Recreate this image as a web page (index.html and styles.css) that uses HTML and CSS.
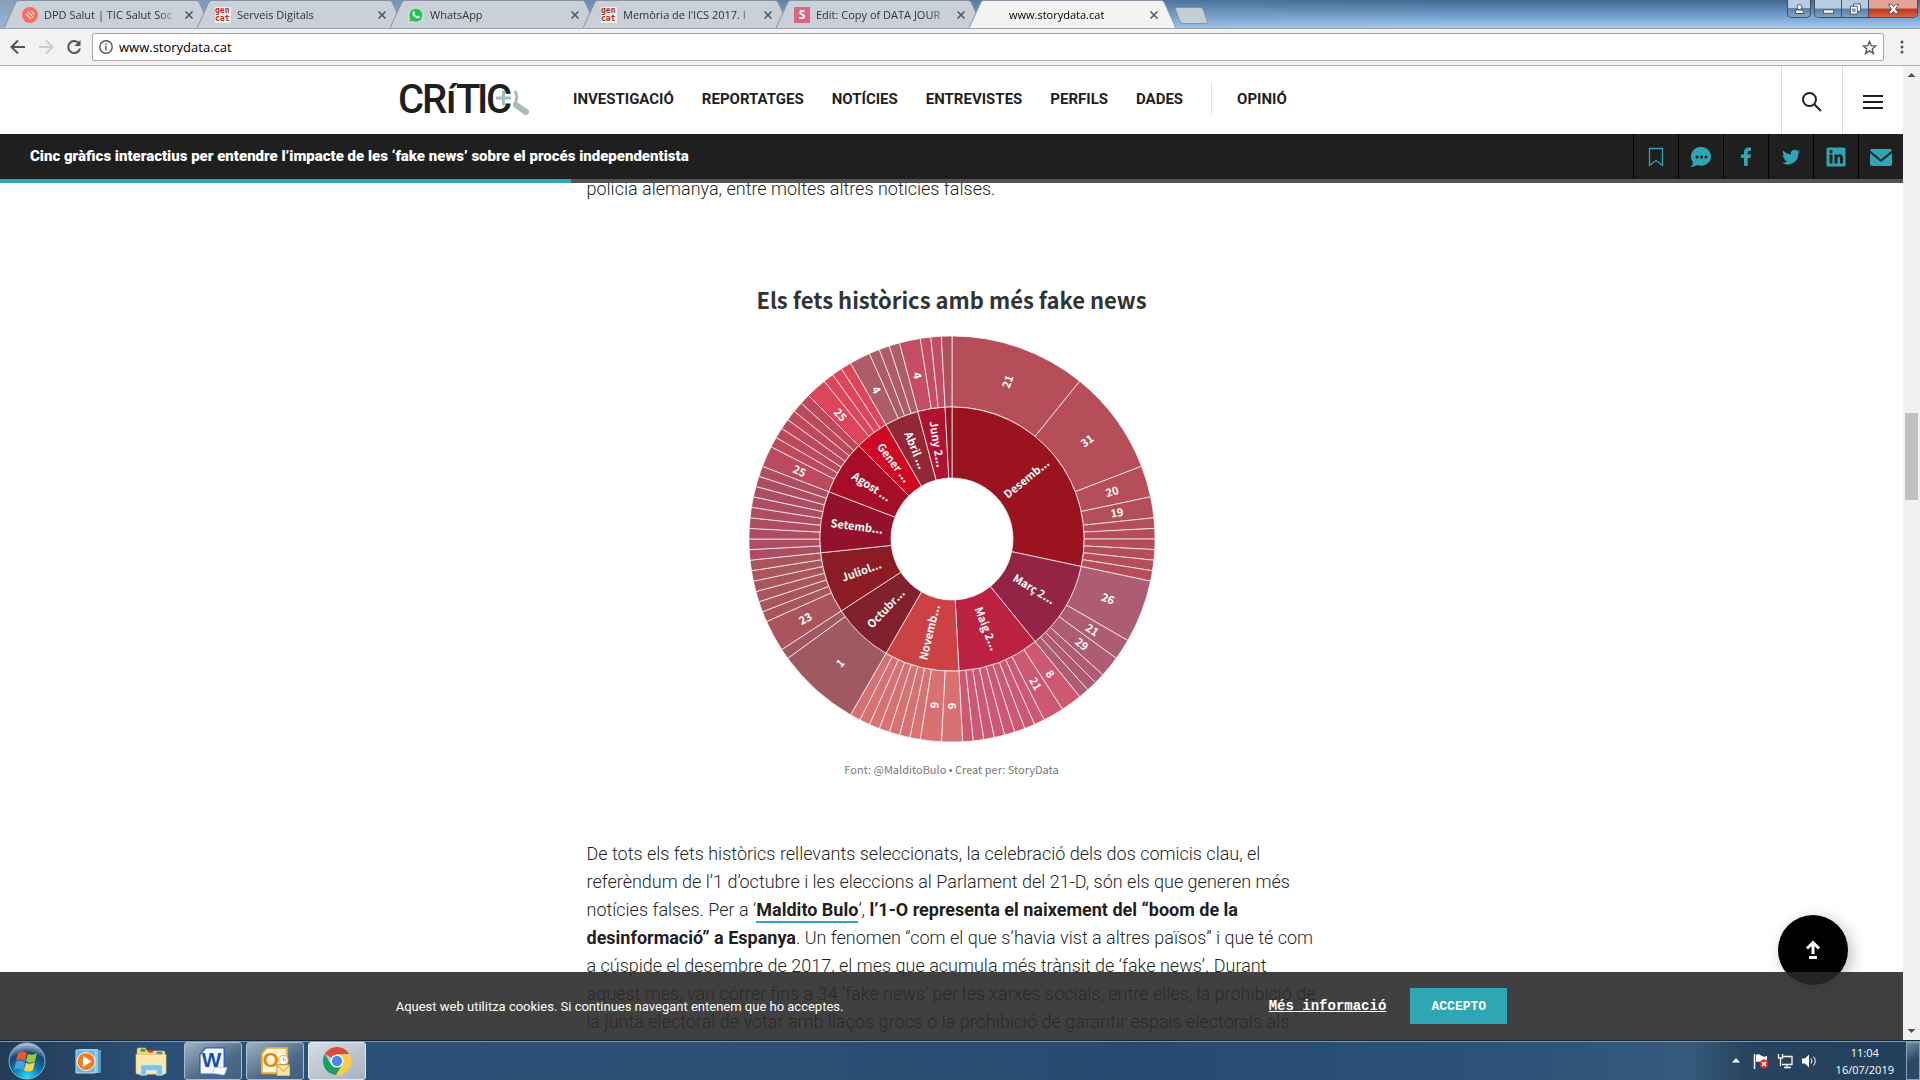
FILE: index.html
```html
<!DOCTYPE html>
<html lang="ca">
<head>
    <meta charset="UTF-8">
    <meta name="viewport" content="width=device-width, initial-scale=1.0">
    <title>www.storydata.cat</title>
    <link rel="stylesheet" href="styles.css">
</head>
<body>
<div class="tab-strip">
    <div class="tab">
        <svg class="tab-shape" viewBox="0 0 207 28" preserveAspectRatio="none"><path d="M0 28 L12 2 Q13 .5 15 .5 H192 Q194 .5 195 2 L207 28"/></svg>
        <svg class="favicon" viewBox="0 0 16 16"><circle cx="8" cy="8" r="8" fill="#fb6a63"/><path d="M4 7l5 5M5.500 4.500l6 6M8.500 3.500l4 4" stroke="#ffd9d5" stroke-width="1.300"/></svg>
        <span class="tab-title">DPD Salut | TIC Salut Soc</span>
        <button class="tab-close" aria-label="Tanca"><svg viewBox="0 0 8 8"><path d="M.5.5l7 7M7.500.5l-7 7"/></svg></button>
    </div>
    <div class="tab">
        <svg class="tab-shape" viewBox="0 0 207 28" preserveAspectRatio="none"><path d="M0 28 L12 2 Q13 .5 15 .5 H192 Q194 .5 195 2 L207 28"/></svg>
        <span class="favicon gencat"><b>gen</b><b>cat</b></span>
        <span class="tab-title">Serveis Digitals</span>
        <button class="tab-close" aria-label="Tanca"><svg viewBox="0 0 8 8"><path d="M.5.5l7 7M7.500.5l-7 7"/></svg></button>
    </div>
    <div class="tab">
        <svg class="tab-shape" viewBox="0 0 207 28" preserveAspectRatio="none"><path d="M0 28 L12 2 Q13 .5 15 .5 H192 Q194 .5 195 2 L207 28"/></svg>
        <svg class="favicon" viewBox="0 0 16 16"><path d="M.5 15.500l1.200-4A7 7 0 1 1 4.600 14.400z" fill="#25c150" stroke="#eafaf0" stroke-width=".8"/><path d="M5.300 4.500c.6-.6 1-.4 1.300.4.300.8.3 1-.3 1.600.6 1.300 1.600 2.200 3 2.800.6-.7.900-.9 1.400-.6 1.100.5 1.400.7 1.100 1.300-.5 1.300-2 1.600-3.300 1.100C6 10.200 4.800 8.500 4.500 6.800c-.1-.9.200-1.700.8-2.300z" fill="#fff"/></svg>
        <span class="tab-title">WhatsApp</span>
        <button class="tab-close" aria-label="Tanca"><svg viewBox="0 0 8 8"><path d="M.5.5l7 7M7.500.5l-7 7"/></svg></button>
    </div>
    <div class="tab">
        <svg class="tab-shape" viewBox="0 0 207 28" preserveAspectRatio="none"><path d="M0 28 L12 2 Q13 .5 15 .5 H192 Q194 .5 195 2 L207 28"/></svg>
        <span class="favicon gencat"><b>gen</b><b>cat</b></span>
        <span class="tab-title">Memòria de l'ICS 2017. I</span>
        <button class="tab-close" aria-label="Tanca"><svg viewBox="0 0 8 8"><path d="M.5.5l7 7M7.500.5l-7 7"/></svg></button>
    </div>
    <div class="tab">
        <svg class="tab-shape" viewBox="0 0 207 28" preserveAspectRatio="none"><path d="M0 28 L12 2 Q13 .5 15 .5 H192 Q194 .5 195 2 L207 28"/></svg>
        <span class="favicon story">S</span>
        <span class="tab-title">Edit: Copy of DATA JOUR</span>
        <button class="tab-close" aria-label="Tanca"><svg viewBox="0 0 8 8"><path d="M.5.5l7 7M7.500.5l-7 7"/></svg></button>
    </div>
    <div class="tab current">
        <svg class="tab-shape" viewBox="0 0 207 28" preserveAspectRatio="none"><path d="M0 28 L12 2 Q13 .5 15 .5 H192 Q194 .5 195 2 L207 28"/></svg>
        <span class="favicon"></span>
        <span class="tab-title">www.storydata.cat</span>
        <button class="tab-close" aria-label="Tanca"><svg viewBox="0 0 8 8"><path d="M.5.5l7 7M7.500.5l-7 7"/></svg></button>
    </div>
    <button class="new-tab" aria-label="Pestanya nova"><svg viewBox="0 0 34 17"><path d="M3 .5h23q2 0 3 2l4.500 12q.5 2-1.500 2H9q-2 0-3-2L1.500 2.500q-.5-2 1.500-2z"/></svg></button>
    <div class="window-buttons">
        <button class="win-user" aria-label="Usuari"><svg viewBox="0 0 12 12"><circle cx="6" cy="4" r="2.500"/><path d="M2 10.500V9q0-2 2-2h4q2 0 2 2v1.500z"/></svg></button>
        <div class="win-group">
            <button class="win-min" aria-label="Minimitza"><svg viewBox="0 0 14 12"><rect x="1.500" y="7" width="11" height="3.500"/></svg></button>
            <button class="win-max" aria-label="Restaura"><svg viewBox="0 0 14 12"><path d="M5 .5h7.500v8H5z"/><path d="M1.500 3h7.500v8.500H1.500z"/><path d="M4 6h2.500v2.500H4z"/></svg></button>
            <button class="win-close" aria-label="Tanca"><svg viewBox="0 0 14 12"><path d="M1.500 1h3.500L7 3.500 9 1h3.500L9.200 6l3.300 5H9L7 8.500 5 11H1.500l3.300-5z"/></svg></button>
        </div>
    </div>
</div>

<div class="toolbar">
    <button class="tool" aria-label="Enrere"><svg viewBox="0 0 16 16"><path d="M15 8H2M8 1.500L1.500 8 8 14.500"/></svg></button>
    <button class="tool disabled" aria-label="Endavant"><svg viewBox="0 0 16 16"><path d="M1 8h13M8 1.500L14.500 8 8 14.500"/></svg></button>
    <button class="tool" aria-label="Recarrega"><svg viewBox="0 0 16 16"><path d="M13 4.500A6 6 0 1 0 14 9.500"/><path d="M14.500 1v6h-6z" class="solid"/></svg></button>
    <div class="address">
        <svg class="info" viewBox="0 0 14 14"><circle cx="7" cy="7" r="6.200"/><path d="M7 6v4.500M7 3.300v1.600"/></svg>
        <input type="text" value="www.storydata.cat" aria-label="Adreça">
        <svg class="star" viewBox="0 0 16 16"><path d="M8 1.500l1.800 4.600 4.900.3-3.800 3.100 1.300 4.800L8 11.600l-4.200 2.700 1.300-4.800L1.300 6.400l4.900-.3z"/></svg>
    </div>
    <button class="tool dots" aria-label="Menú"><svg viewBox="0 0 4 14"><circle cx="2" cy="2" r="1.500"/><circle cx="2" cy="7" r="1.500"/><circle cx="2" cy="12" r="1.500"/></svg></button>
</div>

<div class="viewport">
    <div class="page">
        <header class="site-header">
            <a href="#" class="logo" aria-label="Crític">
                <svg viewBox="0 0 132 36" width="132" height="36">
                    <text x="-1 23 47 57 78 87" y="33">CRíTIC</text>
                    <path d="M97 18h15M104.500 10.500v15" class="glass"/>
                    <path d="M116 11q4 7-1 14" class="glass"/>
                    <path d="M117 25l10 7" class="handle"/>
                </svg>
            </a>
            <nav>
                <a href="#">INVESTIGACIÓ</a>
                <a href="#">REPORTATGES</a>
                <a href="#">NOTÍCIES</a>
                <a href="#">ENTREVISTES</a>
                <a href="#">PERFILS</a>
                <a href="#">DADES</a>
                <a href="#" class="opinion">OPINIÓ</a>
            </nav>
            <div class="header-tools">
                <button aria-label="Cerca"><svg viewBox="0 0 20 20"><circle cx="7.500" cy="7.500" r="6.500"/><path d="M12 12l7 7"/></svg></button>
                <button aria-label="Menú"><svg viewBox="0 0 20 20"><path d="M0 4h20M0 10h20M0 16h20"/></svg></button>
            </div>
        </header>
        <div class="article-bar">
            <h1>Cinc gràfics interactius per entendre l’impacte de les ‘fake news’ sobre el procés independentista</h1>
            <div class="share">
                <a href="#" aria-label="Desa"><svg viewBox="0 0 24 24"><path d="M5.500 3.500h13v17L12 15.500l-6.500 5z" fill="none" stroke="#2ea6b4" stroke-width="1.300"/></svg></a>
                <a href="#" aria-label="Comenta"><svg viewBox="0 0 24 24"><path d="M12.500 2a10 9.300 0 1 1-4 18Q5 22 1.500 22q2.500-2 2.300-5A9.500 9.500 0 0 1 12.500 2z"/><g fill="#1f1f1f"><circle cx="8" cy="12" r="1.500"/><circle cx="12.500" cy="12" r="1.500"/><circle cx="17" cy="12" r="1.500"/></g></svg></a>
                <a href="#" aria-label="Facebook"><svg viewBox="0 0 24 24"><path d="M10 21v-8H7V9.500h3V7c0-3 2-4.500 4.500-4.500H17V6h-1.800c-1.200 0-1.500.6-1.500 1.500v2H17l-.5 3.500h-2.800v8z"/></svg></a>
                <a href="#" aria-label="Twitter"><svg viewBox="0 0 24 24"><path d="M21 6.500c-.7.300-1.400.5-2.100.6.800-.5 1.300-1.200 1.600-2-.7.400-1.500.7-2.300.9a3.700 3.700 0 0 0-6.300 3.400C8.800 9.200 6.100 7.800 4.300 5.500c-1 1.700-.5 3.800 1.100 4.900-.6 0-1.200-.2-1.700-.5 0 1.800 1.200 3.300 3 3.700-.5.100-1.100.2-1.700.1.500 1.400 1.800 2.500 3.500 2.500A7.500 7.500 0 0 1 3 17.800 10.500 10.500 0 0 0 19.200 8.400c.7-.5 1.300-1.200 1.800-1.900z"/></svg></a>
                <a href="#" aria-label="LinkedIn"><svg viewBox="0 0 24 24"><path fill-rule="evenodd" d="M4 2.500h16q1.500 0 1.500 1.500v16q0 1.500-1.500 1.500H4q-1.500 0-1.500-1.500V4Q2.500 2.500 4 2.500zM5.500 9.500v9h3v-9zM7 5a1.700 1.700 0 1 0 .01 0zM10.500 9.500v9h3v-5c0-2.500 2.500-2.300 2.500 0v5h3v-5.600c0-4-4-4.400-5.500-2.200V9.500z"/></svg></a>
                <a href="#" aria-label="Correu"><svg viewBox="0 0 24 24"><path d="M3 4h18q2 0 2 1.500L12 14.500 1 5.500Q1 4 3 4z"/><path d="M1 8l11 9 11-9v11q0 2-2 2H3q-2 0-2-2z"/></svg></a>
            </div>
        </div>
        <div class="progress"><div class="progress-done"></div></div>

        <main>
            <article>
                <p class="scrolled">policia alemanya, entre moltes altres notícies falses.</p>
                <figure>
                    <h2>Els fets històrics amb més fake news</h2>
                    <svg id="sunburst" viewBox="-210 -210 420 420" width="420" height="420"></svg>
                    <figcaption>Font: @MalditoBulo • Creat per: StoryData</figcaption>
                </figure>
                <p>De tots els fets històrics rellevants seleccionats, la celebració dels dos comicis clau, el referèndum de l’1 d’octubre i les eleccions al Parlament del 21-D, són els que generen més notícies falses. Per a ‘<a href="#">Maldito Bulo</a>’, <strong>l’1-O representa el naixement del “boom de la desinformació” a Espanya</strong>. Un fenomen “com el que s’havia vist a altres països” i que té com a cúspide el desembre de 2017, el mes que acumula més trànsit de ‘fake news’. Durant aquest mes, van córrer fins a 34 ‘fake news’ per les xarxes socials, entre elles, la prohibició de la junta electoral de votar amb llaços grocs o la prohibició de garantir espais electorals als</p>
            </article>
        </main>

        <button class="to-top" aria-label="Torna a dalt"><svg viewBox="0 0 16 20"><path d="M8 14V3M2 8.500L8 2.500l6 6M4 17.500h8"/></svg></button>
        <div class="cookies">
            <p>Aquest web utilitza cookies. Si continues navegant entenem que ho acceptes.</p>
            <a href="#">Més informació</a>
            <button>ACCEPTO</button>
        </div>
    </div>
    <div class="scrollbar">
        <svg viewBox="0 0 17 17"><path d="M4.500 11L8.500 7l4 4z"/></svg>
        <div class="thumb"></div>
        <svg class="down" viewBox="0 0 17 17"><path d="M4.500 6l4 4 4-4z"/></svg>
    </div>
</div>

<div class="taskbar">
    <button class="start" aria-label="Inicia"><svg viewBox="0 0 38 38">
        <defs><radialGradient id="orb" cx=".5" cy=".95" r=".95"><stop offset="0" stop-color="#22e0ff"/><stop offset=".4" stop-color="#0a78b4"/><stop offset=".7" stop-color="#154673"/><stop offset="1" stop-color="#b9cfdf"/></radialGradient></defs>
        <circle cx="19" cy="19" r="18" fill="url(#orb)" stroke="#8fb3cd"/>
        <path d="M10 11q4-3 9 0l-2 8q-4-3-9 0z" fill="#e8562a"/><path d="M20 12q5 2 9-1l-2 8q-4 3-9 0z" fill="#9bcb3c"/><path d="M8 20q4-3 9 0l-2 8q-4-3-9 0z" fill="#4d9fe0"/><path d="M18 21q5 2 9-1l-2 8q-4 3-9 0z" fill="#fcd13a"/>
    </svg></button>
    <button class="task" aria-label="Reproductor"><svg viewBox="0 0 32 32"><path d="M9 5h19v23H9z" fill="#4d9fce"/><path d="M6 4h19v24H6z" fill="#8cc6e6"/><path d="M3 5h19v23H3z" fill="#6fb2dc" stroke="#b8def2"/><circle cx="13" cy="16.500" r="9" fill="#f47b20" stroke="#fff"/><path d="M10 11l8.500 5.500L10 22z" fill="#fff"/></svg></button>
    <button class="task" aria-label="Explorador"><svg viewBox="0 0 34 32"><path d="M2 4q0-2 2-2h7l2 3h17q2 0 2 2v22H2z" fill="#f0d684"/><path d="M6 3h5v3H6z" fill="#2fa24a"/><path d="M14 4h5v3h-5z" fill="#cf3c30"/><path d="M23 6h6v3h-6z" fill="#3e8fd4"/><path d="M1 9h32v19q0 2-2 2H3q-2 0-2-2z" fill="#fbe9a5" stroke="#d9b95e" stroke-width=".6"/><path d="M6 31V22q0-2 2-2h19q2 0 2 2v9h-6v-5H12v5z" fill="#7cc1e8" stroke="#d3eefa"/></svg></button>
    <button class="task open" aria-label="Word"><svg viewBox="0 0 32 32"><path d="M8 2h20v28H2V9z" fill="#f4f8fd" stroke="#2c5fb5" stroke-width="1.500"/><path d="M17 23l14 0-3 8-12-2z" fill="#fff" stroke="#a8bbd8" stroke-width=".8"/><text x="4" y="22" class="app-letter word-letter">W</text></svg></button>
    <button class="task open" aria-label="Outlook"><svg viewBox="0 0 32 32"><path d="M7 2h22v27H2V8z" fill="#fff5d6" stroke="#eda91c" stroke-width="2"/><text x="3" y="22" class="app-letter outlook-letter">O</text><circle cx="25" cy="15" r="5" fill="#fff" stroke="#e8a13a"/><path d="M25 12v3h3" stroke="#e07b20" fill="none"/><path d="M18 20h14v12H18z" fill="#fae6a4" stroke="#b98f35"/><path d="M18 20l7 7 7-7" fill="none" stroke="#b98f35"/></svg></button>
    <button class="task open current" aria-label="Chrome"><svg viewBox="0 0 32 32"><path d="M16 16L3 8.500A15 15 0 0 1 29 8.500L16 9z" fill="#dd4b3e"/><path d="M3 8.500A15 15 0 0 0 15 31l7-11.500L9.500 19.500z" fill="#1aa15f"/><path d="M29 8.500A15 15 0 0 1 15 31l7-11.500L16 9h13.500z" fill="#fecd41"/><circle cx="16" cy="16" r="7" fill="#fff"/><circle cx="16" cy="16" r="5.500" fill="#4688f1"/></svg></button>
    <div class="tray">
        <svg class="tray-arrow" viewBox="0 0 8 5"><path d="M0 4.500L4 0l4 4.500z" fill="#fff"/></svg>
        <svg viewBox="0 0 16 16"><path d="M1.500 1v15" stroke="#fff" stroke-width="1.500"/><path d="M3 2q3-1.500 5 .5t6 .5v7q-4 1-6-.5T3 9z" fill="#fff"/><circle cx="11" cy="11" r="4.500" fill="#e02a1f"/><path d="M9 9l4 4M13 9l-4 4" stroke="#fff" stroke-width="1.500"/></svg>
        <svg viewBox="0 0 16 16" fill="none" stroke="#fff" stroke-width="1.300"><path d="M6 3.500h9v8H5M10 11.500V14M7 14.500h7M1.500 1v4h4V1M3.500 5v8"/></svg>
        <svg viewBox="0 0 16 16"><path d="M1 5.500h3L8 1.500v13l-4-4H1z" fill="#fff"/><path d="M10 5.500q2 2.500 0 5M12.500 3.500q3.500 4.500 0 9" fill="none" stroke="#fff"/></svg>
        <div class="clock"><span>11:04</span><span>16/07/2019</span></div>
    </div>
    <button class="show-desktop" aria-label="Mostra l'escriptori"></button>
</div>

<script>
    // fake news per month; each item is [label, number of news]
    const months = [
        { name: 'Desemb', color: '#9c1320', items: [['21', 13], ['31', 10], ['20', 3], ['19', 2], 1, 1, 1, 1, 1, 1] },
        { name: 'Març 2', color: '#932445', items: [['26', 6], ['21', 2], ['29', 2], 1, 1, 1] },
        { name: 'Maig 2', color: '#bb2241', items: [['8', 2], ['21', 2], 1, 1, 1, 1, 1, 1, 1, 1] },
        { name: 'Novemb', color: '#cb4144', items: [['9', 2], ['9', 2], 1, 1, 1, 1, 1, 1, 1] },
        { name: 'Octubr', color: '#80212d', items: [['1', 8], 1] },
        { name: 'Juliol', color: '#8c1c24', items: [['23', 3], 1, 1, 1, 1, 1, 1] },
        { name: 'Setemb', color: '#94112b', items: [1, 1, 1, 1, 1, 1, 1, 1, 1] },
        { name: 'Agost ', color: '#a50e26', items: [['25', 2], 1, 1, 1, 1, 1, 1] },
        { name: 'Gener ', color: '#d00824', items: [['25', 2], 1, 1, 1] },
        { name: 'Abril ', color: '#932733', items: [['4', 2], 1, 1, 1] },
        { name: 'Juny 2', color: '#b01230', items: [['4', 2], 1, 1] },
        { name: '', color: '#8f1626', items: [1] }
    ];
    const radius = [61, 132, 203];
    const svg = document.getElementById('sunburst');
    const total = 120;

    function point(deg, r) {
        const a = (deg - 90) * Math.PI / 180;
        return (r * Math.cos(a)).toFixed(2) + ' ' + (r * Math.sin(a)).toFixed(2);
    }

    function add(tag, attrs, parent) {
        const el = document.createElementNS('http://www.w3.org/2000/svg', tag);
        for (const key in attrs) el.setAttribute(key, attrs[key]);
        (parent || svg).appendChild(el);
        return el;
    }

    function slice(from, to, inner, outer, color, cls) {
        const large = to - from > 180 ? 1 : 0;
        add('path', {
            d: `M${point(from, inner)} L${point(from, outer)} A${outer} ${outer} 0 ${large} 1 ${point(to, outer)} ` +
               `L${point(to, inner)} A${inner} ${inner} 0 ${large} 0 ${point(from, inner)}Z`,
            fill: color,
            class: cls
        });
    }

    function label(text, deg, r, dots) {
        // labels on the left half are turned round to stay readable
        const turn = deg < 180 ? deg - 90 : deg - 270;
        const el = add('text', { transform: `translate(${point(deg, r).replace(' ', ',')}) rotate(${turn})`, dy: 4 });
        el.textContent = text;
        if (dots) add('tspan', { class: 'dots-end' }, el).textContent = '…';
    }

    let angle = 0;
    const labels = [];
    months.forEach(function(month) {
        const start = angle;
        month.items.forEach(function(item) {
            const count = item[1] || item;
            const end = angle + count * 360 / total;
            slice(angle, end, radius[1], radius[2], month.color, 'outer');
            if (item[0]) labels.push([item[0], (angle + end) / 2, 167, false]);
            angle = end;
        });
        slice(start, angle, radius[0], radius[1], month.color, 'inner');
        if (month.name) labels.push([month.name, (start + angle) / 2, 96, true]);
    });
    labels.forEach(function(l) { label(l[0], l[1], l[2], l[3]); });
</script>
</body>
</html>
```
FILE: styles.css
```css
* {
    margin: 0;
    padding: 0;
    box-sizing: border-box;
}
body {
    height: 100vh;
    display: flex;
    flex-direction: column;
    overflow: hidden;
    font-family: Roboto, sans-serif;
    color: #1f1f1f;
    background-color: #fff;
}
button {
    border: none;
    background: none;
    cursor: pointer;
}
svg {
    display: block;
}

/* browser tabs */
.tab-strip {
    height: 28px;
    padding-left: 4px;
    display: flex;
    flex: none;
    background: linear-gradient(90deg, rgba(150, 175, 200, 0.8), rgba(120, 155, 190, 0.4) 50%, transparent 75%), linear-gradient(#44698f, #6d98c5 50%, #a3cbf3);
    font-family: "Open Sans", sans-serif;
    font-size: 11px;
}
.tab {
    position: relative;
    width: 207px;
    height: 28px;
    margin-right: -14px;
    padding: 1px 18px 0 18px;
    display: flex;
    align-items: center;
    color: #333;
}
.tab-shape {
    position: absolute;
    left: 0;
    top: 0;
    width: 100%;
    height: 28px;
}
.tab-shape path {
    fill: #c9d0d8;
    stroke: #8793a0;
}
.tab.current {
    z-index: 2;
    color: #000;
}
.tab.current .tab-shape path {
    fill: #f2f2f2;
}
.favicon {
    position: relative;
    flex: none;
    width: 16px;
    height: 16px;
    margin-right: 6px;
}
.gencat {
    background-color: #eee;
    color: #a8322a;
    font-family: "DejaVu Sans Mono", monospace;
    font-size: 8px;
    line-height: 8px;
}
.gencat b {
    display: block;
}
.story {
    background-color: #dd6584;
    color: #fff;
    font-size: 12px;
    font-weight: bold;
    line-height: 16px;
    text-align: center;
}
.tab-title {
    position: relative;
    flex: 1;
    overflow: hidden;
    white-space: nowrap;
    -webkit-mask-image: linear-gradient(90deg, #000 85%, transparent);
    mask-image: linear-gradient(90deg, #000 85%, transparent);
}
.tab-close {
    position: relative;
    width: 8px;
    height: 8px;
    margin-left: 6px;
}
.tab-close path {
    stroke: #555;
    stroke-width: 1.5;
}
.new-tab {
    width: 34px;
    height: 17px;
    margin: 7px 0 0 12px;
}
.new-tab path {
    fill: #c3ced9;
    stroke: #8795a3;
}
.window-buttons {
    margin-left: auto;
    padding-right: 2px;
    display: flex;
    gap: 3px;
}
.window-buttons button {
    height: 18px;
    display: flex;
    justify-content: center;
    align-items: center;
    background: linear-gradient(#b9cbe0 45%, #5d7f9f 50%, #86a6c4);
}
.window-buttons svg {
    width: 13px;
    height: 12px;
    fill: #fff;
    stroke: #44546a;
}
.window-buttons .win-user {
    width: 24px;
    border: 1px solid #39506b;
    border-top: none;
    border-radius: 0 0 5px 5px;
}
.win-group {
    height: 18px;
    display: flex;
    border: 1px solid #39506b;
    border-top: none;
    border-radius: 0 0 5px 5px;
    overflow: hidden;
}
.win-min, .win-max {
    width: 27px;
    border-right: 1px solid #39506b;
}
.win-group .win-close {
    width: 48px;
    background: linear-gradient(#e2a595 45%, #c2331c 50%, #d9694c);
}

/* address bar */
.toolbar {
    height: 38px;
    flex: none;
    padding: 0 16px 0 10px;
    display: flex;
    align-items: center;
    background-color: #f2f2f2;
    border-top: 1px solid #9aa3ad;
    border-bottom: 1px solid #b0b0b0;
}
.tool {
    width: 16px;
    height: 16px;
    margin-right: 12px;
}
.tool path {
    fill: none;
    stroke: #555;
    stroke-width: 2;
}
.tool .solid {
    fill: #555;
    stroke: none;
}
.tool.disabled path {
    stroke: #ccc;
}
.tool.dots {
    width: 4px;
    height: 14px;
    margin: 0 0 0 16px;
}
.dots circle {
    fill: #555;
}
.address {
    flex: 1;
    height: 28px;
    margin-left: -2px;
    padding: 0 6px;
    display: flex;
    align-items: center;
    background-color: #fff;
    border: 1px solid #a8a8a8;
    border-radius: 2px;
}
.address svg {
    fill: none;
    stroke: #555;
    stroke-width: 1.4;
}
.info {
    width: 14px;
    height: 14px;
}
.star {
    width: 15px;
    height: 15px;
}
.address input {
    flex: 1;
    margin-left: 6px;
    border: none;
    outline: none;
    background: none;
    font-family: "Open Sans", sans-serif;
    font-size: 13px;
    color: #000;
}

.viewport {
    flex: 1;
    min-height: 0;
    display: flex;
}
.page {
    position: relative;
    flex: 1;
    min-width: 0;
    display: flex;
    flex-direction: column;
    overflow: hidden;
}
.scrollbar {
    width: 17px;
    display: flex;
    flex-direction: column;
    align-items: center;
    background-color: #f1f1f1;
}
.scrollbar svg {
    width: 17px;
    height: 17px;
    fill: #505050;
}
.thumb {
    width: 13px;
    height: 87px;
    margin-top: 330px;
    background-color: #c1c1c1;
}
.down {
    margin-top: auto;
}

/* site header */
.site-header {
    height: 68px;
    flex: none;
    padding-left: 399px;
    display: flex;
}
.logo {
    width: 132px;
    margin: 14px 42px 0 0;
}
.logo text {
    font-family: Roboto, sans-serif;
    font-size: 40px;
    font-weight: 500;
    fill: #1f1f1f;
}
.glass, .handle {
    fill: none;
    stroke: #a7bcb9;
    stroke-width: 3;
}
.handle {
    stroke-width: 6;
    stroke-linecap: round;
}
nav {
    flex: 1;
    display: flex;
    align-items: center;
    gap: 28px;
    padding-bottom: 2px;
}
nav a {
    color: #1f1f1f;
    font-size: 15px;
    font-weight: 700;
    text-decoration: none;
}
nav .opinion {
    padding-left: 25px;
    border-left: 1px solid #ddd;
    line-height: 32px;
}
.header-tools {
    display: flex;
}
.header-tools button {
    width: 61px;
    padding-top: 4px;
    display: flex;
    justify-content: center;
    align-items: center;
    border-left: 1px solid #ddd;
}
.header-tools svg {
    width: 20px;
    height: 20px;
    fill: none;
    stroke: #1f1f1f;
    stroke-width: 2;
}
.article-bar {
    height: 45px;
    flex: none;
    padding-left: 30px;
    display: flex;
    justify-content: space-between;
    align-items: center;
    background-color: #1f1f1f;
}
.article-bar h1 {
    padding-bottom: 2px;
    color: #fff;
    font-size: 15px;
    font-weight: 900;
}
.share {
    height: 45px;
    display: flex;
}
.share a {
    width: 45px;
    display: flex;
    justify-content: center;
    align-items: center;
    border-left: 1px solid #000;
}
.share svg {
    width: 24px;
    height: 24px;
    fill: #2ea6b4;
}
.progress {
    height: 4px;
    flex: none;
    background-color: #545454;
}
.progress-done {
    width: 30%;
    height: 4px;
    background-color: #2ea6b4;
}

/* article */
main {
    flex: 1;
    min-height: 0;
    overflow: hidden;
}
article {
    max-width: 730px;
    margin: 0 auto;
    font-size: 18px;
    font-weight: 300;
    line-height: 28px;
}
.scrolled {
    margin-top: -8px;
}
article p a {
    padding-bottom: 1px;
    color: #1f1f1f;
    font-weight: 700;
    text-decoration: none;
    border-bottom: 2px solid #2ea6b4;
}
article strong {
    font-weight: 700;
}
figure {
    margin: 80px 0 62px;
    display: flex;
    flex-direction: column;
    align-items: center;
    font-family: "Noto Sans CJK KR", sans-serif;
}
figure h2 {
    margin-bottom: 14px;
    color: #333;
    font-size: 22px;
    font-weight: 700;
    line-height: 32px;
}
figcaption {
    margin: 12px 0 1px;
    color: #777;
    font-size: 11px;
    font-weight: 400;
    line-height: 16px;
}
#sunburst path {
    stroke: #fff;
    stroke-opacity: 0.7;
}
#sunburst .outer {
    fill-opacity: 0.75;
}
#sunburst text {
    fill: #fff;
    font-size: 11px;
    font-weight: 700;
    text-anchor: middle;
    white-space: pre;
}
#sunburst .dots-end {
    font-family: "DejaVu Sans", sans-serif;
}

.to-top {
    position: absolute;
    right: 55px;
    bottom: 55px;
    width: 70px;
    height: 70px;
    display: flex;
    justify-content: center;
    align-items: center;
    background-color: #000;
    border-radius: 50%;
    box-shadow: 4px 4px 15px rgba(0, 0, 0, 0.25);
}
.to-top svg {
    width: 16px;
    height: 20px;
    fill: none;
    stroke: #fff;
    stroke-width: 3;
}
.cookies {
    position: absolute;
    left: 0;
    right: 0;
    bottom: 0;
    height: 68px;
    display: flex;
    justify-content: center;
    align-items: center;
    background-color: rgba(40, 40, 40, 0.89);
    color: #fff;
}
.cookies p {
    width: 100%;
    max-width: 873px;
    font-size: 13px;
}
.cookies a {
    margin-right: 24px;
    color: #fff;
    font-family: "Liberation Mono", monospace;
    font-size: 14px;
    font-weight: bold;
    white-space: nowrap;
}
.cookies button {
    width: 97px;
    height: 36px;
    background-color: #2ea6b4;
    color: #fff;
    font-family: "Liberation Mono", monospace;
    font-size: 13px;
    font-weight: bold;
}

/* taskbar */
.taskbar {
    height: 40px;
    flex: none;
    padding-left: 8px;
    display: flex;
    align-items: center;
    background: linear-gradient(90deg, #233b55, #2b5076 8%, #2d5075 35%, #274a70 60%, #2d5378 80%, #355a7c 88%, #28435f 91%, #22405e);
    border-top: 1px solid #16273a;
    box-shadow: inset 0 1px 0 #7f97b0;
}
.start {
    width: 38px;
    height: 38px;
    margin-right: 14px;
}
.task {
    width: 58px;
    height: 38px;
    margin-right: 4px;
    display: flex;
    justify-content: center;
    align-items: center;
    border-radius: 3px;
}
.task svg {
    width: 32px;
    height: 32px;
}
.task.open {
    background: linear-gradient(150deg, #9fb2c5, #4d6b88 60%, #40617f);
    border: 1px solid #a9bccd;
}
.task.open svg {
    width: 30px;
    height: 30px;
}
.task.open.current {
    background: linear-gradient(150deg, #d6dde4, #a5b2c0);
    border-color: #e4eaf0;
}
.app-letter {
    font-family: "Liberation Sans", sans-serif;
    font-size: 22px;
    font-weight: bold;
}
.word-letter {
    fill: #1a4fa8;
}
.outlook-letter {
    fill: #e08a10;
}
.tray {
    margin-left: auto;
    padding-right: 12px;
    display: flex;
    align-items: center;
    gap: 8px;
}
.tray svg {
    width: 16px;
    height: 16px;
}
.tray .tray-arrow {
    width: 8px;
    height: 5px;
    margin-right: 5px;
}
.clock {
    margin-left: 11px;
    display: flex;
    flex-direction: column;
    align-items: center;
    color: #fff;
    font-family: "Open Sans", sans-serif;
    font-size: 11px;
    line-height: 17px;
}
.show-desktop {
    width: 14px;
    height: 38px;
    border: 1px solid #8ba1b6;
    background: linear-gradient(150deg, #6f8aa3, #2a4763 50%);
}
```
